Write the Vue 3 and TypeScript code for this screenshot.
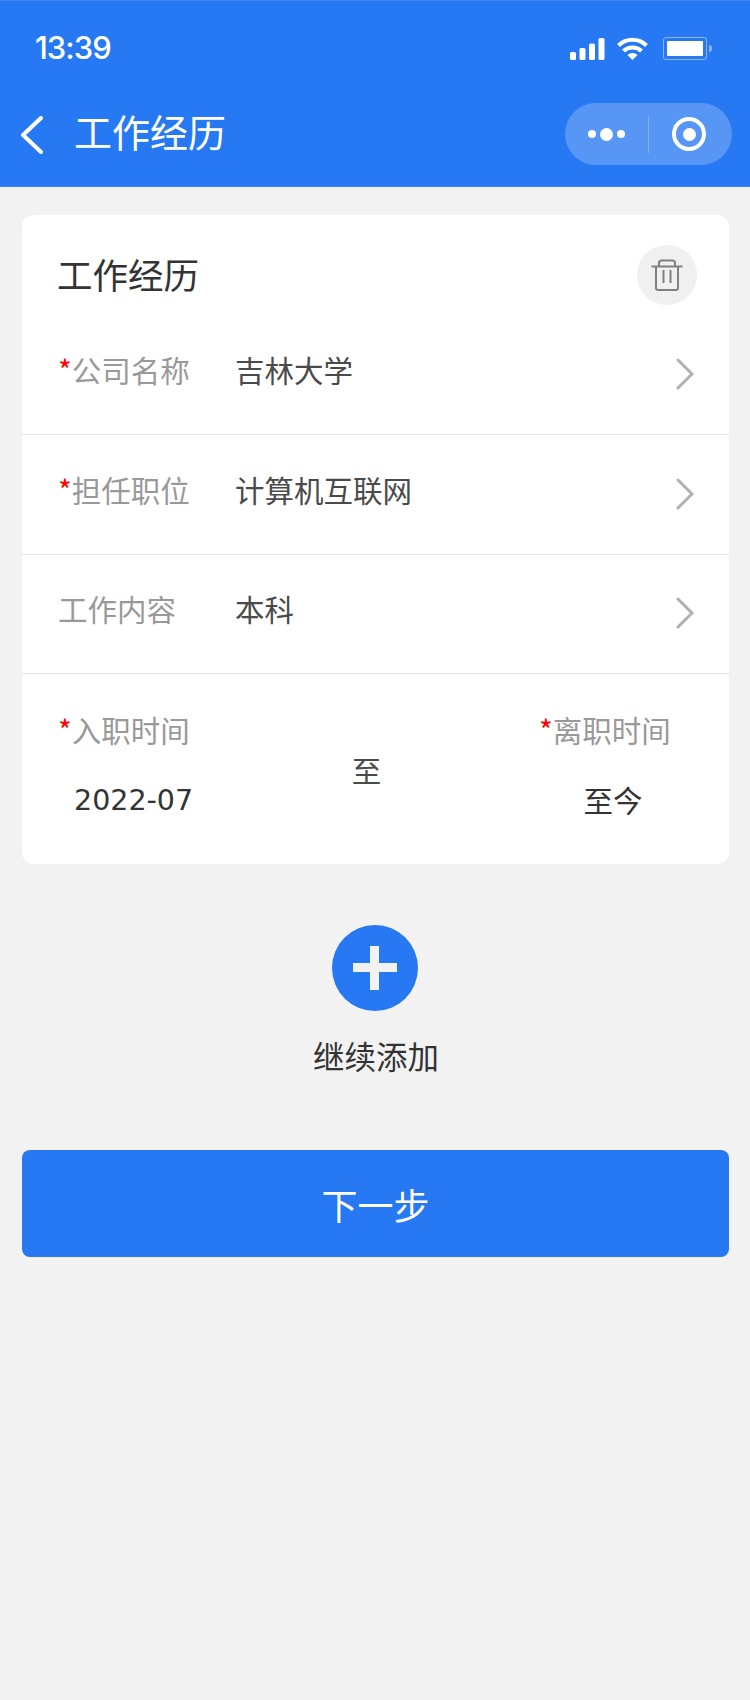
<script setup lang="ts">
interface Row {
  label: string
  value: string
  required: boolean
}

const rows: Row[] = [
  { label: '公司名称', value: '吉林大学', required: true },
  { label: '担任职位', value: '计算机互联网', required: true },
  { label: '工作内容', value: '本科', required: false },
]
</script>

<template>
  <div class="page">
    <header class="nav">
      <div class="status">
        <span class="time">13:39</span>
        <div class="status-icons">
          <svg class="signal" width="35" height="22" viewBox="0 0 35 22" fill="#fff">
            <rect x="0" y="14" width="6" height="8" rx="1.5" />
            <rect x="9.500" y="10" width="6" height="12" rx="1.500" />
            <rect x="19" y="5.500" width="6" height="16.500" rx="1.500" />
            <rect x="28.500" y="0" width="6" height="22" rx="1.500" />
          </svg>
          <svg class="wifi" width="31" height="23" viewBox="0 0 31 23" fill="none" stroke="#fff" stroke-width="4">
            <path d="M1.500 8.500a20 20 0 0 1 28 0" />
            <path d="M6.500 14a13 13 0 0 1 18 0" />
            <path d="M15.500 23l-5-5a7 7 0 0 1 10 0z" fill="#fff" stroke="none" />
          </svg>
          <div class="battery">
            <div class="battery-body"><div class="battery-fill"></div></div>
            <div class="battery-tip"></div>
          </div>
        </div>
      </div>
      <div class="bar">
        <svg class="back" width="24" height="38" viewBox="0 0 24 38" fill="none" stroke="#fff" stroke-width="4" stroke-linecap="round" stroke-linejoin="round">
          <path d="M21 2L3 19l18 17" />
        </svg>
        <span class="nav-title">工作经历</span>
        <div class="capsule">
          <div class="dots">
            <i class="dot"></i>
            <i class="dot dot-big"></i>
            <i class="dot"></i>
          </div>
          <div class="capsule-line"></div>
          <div class="target"><i></i></div>
        </div>
      </div>
    </header>

    <section class="card">
      <div class="card-head">
        <h2>工作经历</h2>
        <div class="trash">
          <svg width="32" height="32" viewBox="0 0 32 32" fill="none" stroke="#808080" stroke-width="2">
            <path d="M0.500 7.500h31" />
            <path d="M8 7V4A2.500 2.500 0 0 1 10.500 1.500h11A2.500 2.500 0 0 1 24 4V7" />
            <path d="M5 8v21a2 2 0 0 0 2 2h18a2 2 0 0 0 2-2V8" />
            <path d="M12.500 11v13M19.500 11v13" />
          </svg>
        </div>
      </div>

      <div v-for="row in rows" :key="row.label" class="row">
        <div class="label row-label"><span v-if="row.required" class="star">*</span>{{ row.label }}</div>
        <div class="value">{{ row.value }}</div>
        <svg class="arrow" width="18" height="32" viewBox="0 0 18 32" fill="none" stroke="#b0b0b0" stroke-width="3" stroke-linecap="round">
          <path d="M2 2l14 14L2 30" />
        </svg>
      </div>

      <div class="dates">
        <div class="date-col">
          <div class="label"><span class="star">*</span>入职时间</div>
          <div class="date-value date-left">2022-07</div>
        </div>
        <div class="to">至</div>
        <div class="date-col date-col-right">
          <div class="label"><span class="star">*</span>离职时间</div>
          <div class="date-value date-right">至今</div>
        </div>
      </div>
    </section>

    <div class="add">
      <div class="add-circle"></div>
      <div class="add-text">继续添加</div>
    </div>

    <button class="next" type="button">下一步</button>
  </div>
</template>

<style scoped>
.page {
  width: 750px;
  height: 1700px;
  background: #f2f2f2;
  font-family: "Noto Sans CJK SC", "Noto Sans", sans-serif;
  overflow: hidden;
}

.nav {
  height: 187px;
  box-sizing: border-box;
  background: #2678f3;
  color: #fff;
  border-top: 1px solid #3f87f6;
  border-bottom: 1px solid #3a84f6;
}

.status {
  height: 89px;
  box-sizing: border-box;
  padding: 6px 38px 0 35px;
  display: flex;
  align-items: center;
  justify-content: space-between;
}

.time {
  font-family: Inter, "Liberation Sans", sans-serif;
  font-size: 31px;
  font-weight: 500;
  letter-spacing: -1px;
  margin-top: -2px;
}

.status-icons {
  display: flex;
  align-items: center;
}

.signal {
  margin-right: 12px;
  margin-top: 1px;
}

.wifi {
  margin-right: 15px;
}

.battery {
  display: flex;
  align-items: center;
}

.battery-body {
  width: 44px;
  height: 23px;
  box-sizing: border-box;
  border: 1px solid #8ab5f8;
  border-radius: 3px;
  padding: 3px 3px;
}

.battery-fill {
  height: 100%;
  background: #fff;
  border-radius: 1px;
}

.battery-tip {
  width: 3px;
  height: 7px;
  margin-left: 2px;
  background: #8ab5f8;
  border-radius: 0 3px 3px 0;
}

.bar {
  height: 97px;
  margin-top: -3px;
  padding: 0 18px 0 20px;
  display: flex;
  align-items: center;
}

.back {
  margin-top: -1px;
}

.nav-title {
  margin-left: 30px;
  margin-bottom: 10px;
  font-size: 38px;
  line-height: 50px;
}

.capsule {
  margin-left: auto;
  width: 167px;
  height: 62px;
  margin-top: -3px;
  border-radius: 31px;
  background: #5896f6;
  display: flex;
  align-items: center;
  box-sizing: border-box;
  padding-left: 23px;
}

.dots {
  display: flex;
  align-items: center;
  gap: 4px;
  width: 58px;
}

.dot {
  width: 8px;
  height: 8px;
  border-radius: 50%;
  background: #fff;
}

.dot-big {
  width: 13px;
  height: 13px;
}

.capsule-line {
  width: 1px;
  height: 37px;
  margin-left: 2px;
  background: #7fb0f8;
}

.target {
  width: 34px;
  height: 34px;
  box-sizing: border-box;
  margin-left: 23px;
  border: 4px solid #fff;
  border-radius: 50%;
  display: flex;
  align-items: center;
  justify-content: center;
}

.target i {
  width: 13px;
  height: 13px;
  border-radius: 50%;
  background: #fff;
}

.card {
  margin: 28px 21px 0 22px;
  background: #fff;
  border-radius: 12px;
  overflow: hidden;
}

.card-head {
  height: 100px;
  box-sizing: border-box;
  padding: 21px 32px 0 35px;
  display: flex;
  align-items: center;
  justify-content: space-between;
}

.card-head h2 {
  margin: -4px 0 0;
  font-size: 35.500px;
  font-weight: 400;
  color: #333;
  line-height: 50px;
}

.trash {
  width: 60px;
  height: 60px;
  margin-top: -1px;
  border-radius: 50%;
  background: #f0f0f0;
  display: flex;
  align-items: center;
  justify-content: center;
}

.row {
  height: 120px;
  box-sizing: border-box;
  padding: 0 35px 0 36px;
  display: flex;
  align-items: center;
  border-bottom: 1px solid #e5e5e5;
}

.row:nth-child(4) {
  height: 119px;
}

.label {
  font-size: 29.500px;
  line-height: 40px;
  color: #999;
  white-space: nowrap;
}

.row-label {
  width: 177px;
  margin-bottom: 12px;
}

.star {
  color: #f00;
}

.value {
  margin-bottom: 12px;
  font-size: 29.500px;
  line-height: 40px;
  color: #4a4a4a;
}

.arrow {
  margin-left: auto;
  margin-top: -2px;
}

.dates {
  height: 190px;
  box-sizing: border-box;
  padding: 35px 59px 0 36px;
  display: flex;
  justify-content: space-between;
}

.date-col {
  width: 140px;
}

.date-col-right {
  width: 131px;
}

.date-value {
  margin-top: 32px;
  font-size: 29.500px;
  line-height: 40px;
  color: #333;
}

.date-left {
  font-family: "DejaVu Sans", sans-serif;
  font-size: 28.500px;
  padding-left: 16px;
}

.date-right {
  margin-top: 30px;
  text-align: center;
  padding-left: 17px;
}

.to {
  font-size: 29.500px;
  line-height: 40px;
  color: #4a4a4a;
  margin-top: 40px;
  margin-left: -4px;
}

.add {
  margin-top: 61px;
  display: flex;
  flex-direction: column;
  align-items: center;
}

.add-circle {
  position: relative;
  width: 86px;
  height: 86px;
  border-radius: 50%;
  background: #2678f3;
}

.add-circle::before,
.add-circle::after {
  content: "";
  position: absolute;
  background: #f2f2f2;
}

.add-circle::before {
  left: 21px;
  top: 38px;
  width: 44px;
  height: 9px;
}

.add-circle::after {
  left: 38px;
  top: 21px;
  width: 9px;
  height: 44px;
}

.add-text {
  margin-top: 22px;
  padding-left: 2px;
  font-size: 31.500px;
  line-height: 44px;
  color: #333;
}

.next {
  display: block;
  width: 707px;
  height: 107px;
  margin: 73px 0 0 22px;
  padding: 0;
  border: 0;
  border-radius: 8px;
  background: #2678f3;
  color: #fff;
  font-family: inherit;
  font-size: 36px;
}
</style>
